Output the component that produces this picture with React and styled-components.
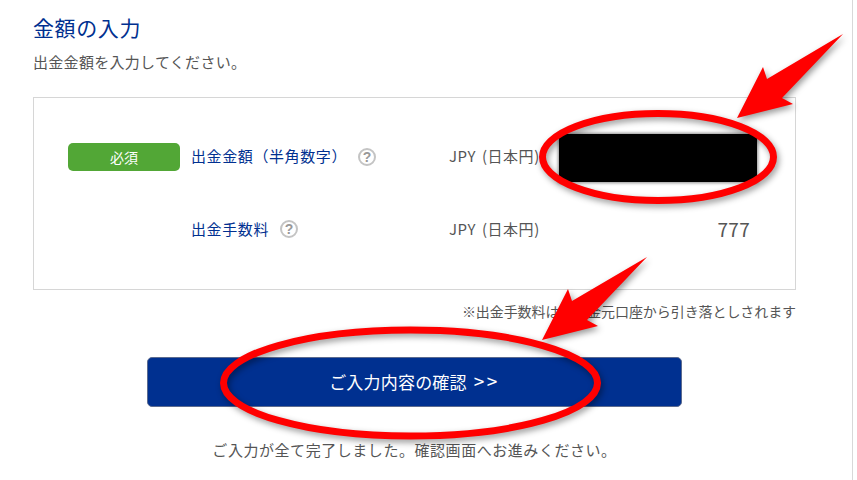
import React from "react";
import styled, { createGlobalStyle } from "styled-components";

const GlobalStyle = createGlobalStyle`
  html, body {
    margin: 0;
    padding: 0;
    background: #fff;
  }
  body {
    font-family: "Noto Sans CJK JP", "Noto Sans", sans-serif;
    color: #555;
    overflow: hidden;
  }
`;

const Page = styled.div`
  position: relative;
  width: 853px;
  height: 480px;
  box-sizing: border-box;
  border-right: 1px solid #d8d8d8;
  padding: 12px 56px 0 33px;
`;

const Title = styled.h2`
  margin: 0;
  font-size: 21px;
  line-height: 30px;
  letter-spacing: 0.6px;
  font-weight: 400;
  color: #003090;
`;

const Lead = styled.p`
  margin: 6px 0 0;
  font-size: 15px;
  line-height: 28px;
  letter-spacing: 0.3px;
`;

const FormBox = styled.div`
  box-sizing: border-box;
  height: 193px;
  margin-top: 21px;
  padding: 36px 38px 0 34px;
  border: 1px solid #d6d6d6;
  display: flex;
  flex-direction: column;
  gap: 24px;
`;

const Row = styled.div`
  display: grid;
  grid-template-columns: 112px 269px 110px 198px;
  height: 48px;
  align-items: center;
`;

const Badge = styled.span`
  height: 28px;
  margin-top: -2px;
  border-radius: 5px;
  background: #52a736;
  color: #fff;
  font-size: 14px;
  line-height: 28px;
  text-align: center;
`;

const Label = styled.div`
  grid-column: 2;
  display: flex;
  align-items: center;
  gap: ${(p) => p.$gap}px;
  margin-left: 11px;
  margin-top: -${(p) => p.$lift}px;
  font-size: 15px;
  letter-spacing: 0.6px;
  color: #003090;
`;

const Help = styled.span`
  box-sizing: border-box;
  width: 18px;
  height: 18px;
  margin-top: ${(p) => p.$drop}px;
  border: 2px solid #c4c4c4;
  border-radius: 50%;
  color: #999;
  font-family: "Liberation Sans", sans-serif;
  font-size: 14px;
  font-weight: 700;
  line-height: 14px;
  letter-spacing: 0;
  text-align: center;
`;

const Currency = styled.div`
  margin-top: -${(p) => p.$lift}px;
  font-size: 15px;
  letter-spacing: 0.55px;
  word-spacing: 2px;
  white-space: nowrap;
`;

const Masked = styled.div`
  height: 48px;
  background: #000;
  box-shadow: 0 0 3px 1px rgba(0, 0, 0, 0.45);
`;

const Amount = styled.div`
  margin-top: -3px;
  padding-right: 7px;
  font-size: 19px;
  letter-spacing: 0.3px;
  text-align: right;
`;

const Note = styled.p`
  margin: 9px 0 0;
  font-size: 14px;
  line-height: 24px;
  letter-spacing: -0.08px;
  text-align: right;
`;

const Submit = styled.button`
  display: block;
  box-sizing: border-box;
  width: 535px;
  height: 50px;
  margin: 34px auto 0 114px;
  padding: 0 0 3px;
  border: 1px solid #5c6b8f;
  border-radius: 5px;
  background: #003090;
  color: #fff;
  font-family: inherit;
  font-size: 17px;
  letter-spacing: 0.2px;
`;

const Chevrons = styled.span`
  margin-left: 3px;
  font-size: 19px;
  letter-spacing: 2.5px;
`;

const Done = styled.p`
  margin: 30px 0 0;
  font-size: 15px;
  line-height: 26px;
  letter-spacing: 0.55px;
  text-align: center;
`;

const Markup = styled.svg`
  position: absolute;
  top: 0;
  left: 0;
  pointer-events: none;
  filter: drop-shadow(2px 3px 3px rgba(0, 0, 0, 0.4));
`;

const Ring = styled.ellipse`
  fill: none;
  stroke: #f00;
  stroke-width: 7;
`;

const Arrow = styled.polygon`
  fill: #f00;
`;

export default function App() {
  return (
    <>
      <GlobalStyle />
      <Page>
        <Title>金額の入力</Title>
        <Lead>出金金額を入力してください。</Lead>
        <FormBox>
          <Row>
            <Badge>必須</Badge>
            <Label $gap={11} $lift={5}>
              出金金額（半角数字）
              <Help $drop={3}>?</Help>
            </Label>
            <Currency $lift={5}>JPY (日本円)</Currency>
            <Masked />
          </Row>
          <Row>
            <Label $gap={11} $lift={3}>
              出金手数料
              <Help $drop={1}>?</Help>
            </Label>
            <Currency $lift={3}>JPY (日本円)</Currency>
            <Amount>777</Amount>
          </Row>
        </FormBox>
        <Note>※出金手数料は、出金元口座から引き落としされます</Note>
        <Submit>
          ご入力内容の確認 <Chevrons>&gt;&gt;</Chevrons>
        </Submit>
        <Done>ご入力が全て完了しました。確認画面へお進みください。</Done>
        <Markup width="857" height="480" viewBox="0 0 857 480">
          <Ring cx="658" cy="157" rx="115.5" ry="43.5" />
          <Arrow points="737,118 763,67 767,79 843,34 782,98 793,104" />
          <Ring cx="410.5" cy="383" rx="187" ry="53" />
          <Arrow points="542,340 568,289 572,301 647,257 587,320 598,326" />
        </Markup>
      </Page>
    </>
  );
}
